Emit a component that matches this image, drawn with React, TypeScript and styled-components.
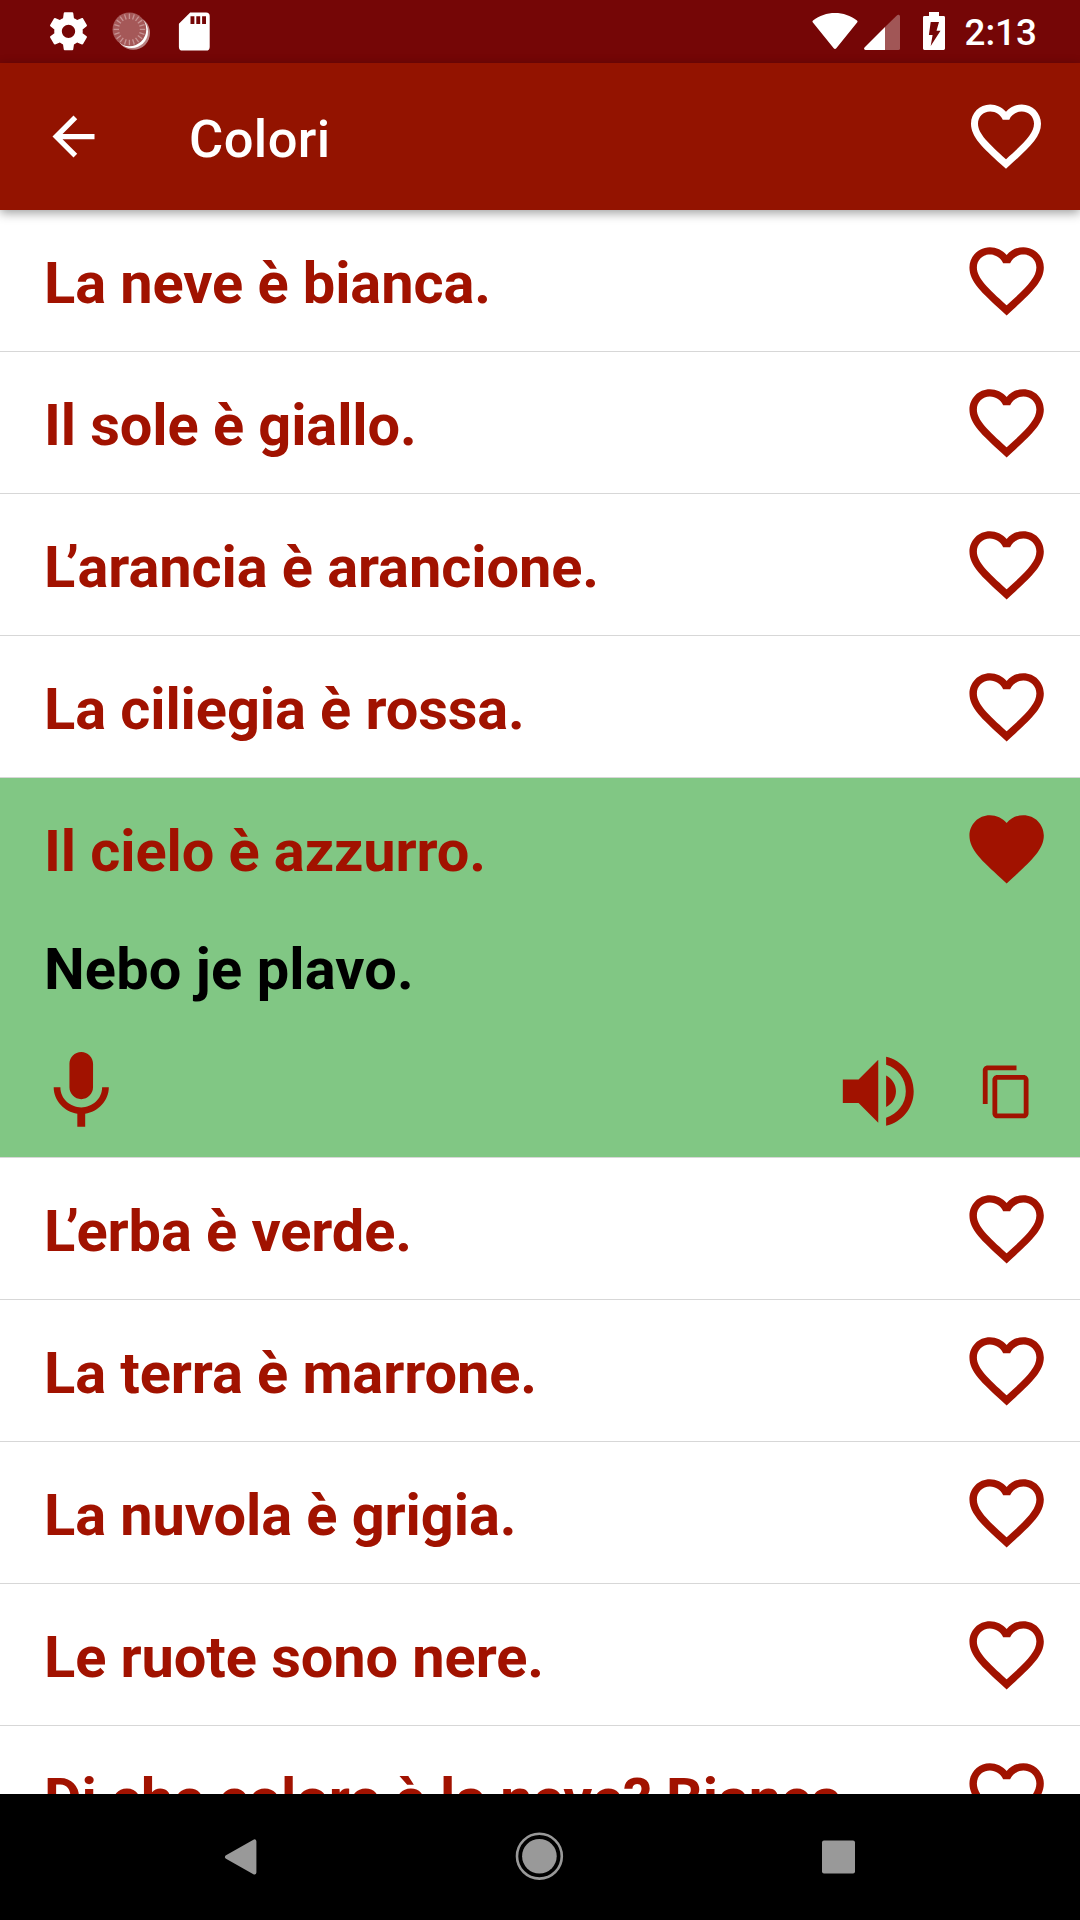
import React from "react";
import styled, { createGlobalStyle } from "styled-components";

const RED = "#a11200";

const Global = createGlobalStyle`
  body { margin: 0; background: #fff; }
  * { box-sizing: border-box; }
`;

const Screen = styled.div`
  display: flex;
  flex-direction: column;
  width: 1080px;
  height: 1920px;
  overflow: hidden;
  background: #fff;
  font-family: Roboto, "Noto Sans", sans-serif;
`;

const StatusBar = styled.header`
  display: flex;
  justify-content: space-between;
  flex: none;
  height: 63px;
  padding: 0 40px 0 46px;
  background: #750606;
`;

const StatusGroup = styled.div`
  display: flex;
  align-items: flex-start;
`;

const Clock = styled.span`
  width: 75.5px;
  margin-left: 16.5px;
  padding-top: 11px;
  color: #fff;
  font-size: 36.75px;
  font-weight: 500;
  line-height: 44px;
  white-space: nowrap;
`;

const AppBar = styled.nav`
  display: flex;
  align-items: center;
  flex: none;
  height: 147px;
  padding: 0 32px 0 42px;
  background: #931300;
  box-shadow: 0 3px 10px rgba(0, 0, 0, 0.38);
  z-index: 1;
`;

const Title = styled.h1`
  flex: 1;
  margin: 5px 0 0 84px;
  color: #fff;
  font-size: 52.5px;
  font-weight: 500;
  line-height: 62px;
  letter-spacing: 0.4px;
`;

const IconButton = styled.button<{ $lift?: number }>`
  display: flex;
  padding: 0;
  margin-bottom: ${(p) => p.$lift ?? 0}px;
  border: 0;
  background: none;
`;

const List = styled.main`
  flex: 1;
  min-height: 0;
  overflow: hidden;
`;

const Item = styled.article<{ $open?: boolean }>`
  border-bottom: 1px solid #d7d7d7;
  background: ${(p) => (p.$open ? "#81c784" : "#fff")};
  height: ${(p) => (p.$open ? 380 : 142)}px;
`;

const Row = styled.div`
  display: flex;
  align-items: flex-start;
  justify-content: space-between;
  height: 141px;
  padding: 26px 29px 0 44px;
`;

const Phrase = styled.span<{ $color?: string; $tracking?: number }>`
  display: block;
  padding-top: 13px;
  color: ${(p) => p.$color ?? RED};
  font-size: 57.75px;
  font-weight: 700;
  line-height: 68px;
  letter-spacing: ${(p) => p.$tracking ?? -0.09}px;
  white-space: nowrap;
`;

const Elision = styled.span`
  letter-spacing: -9.5px;
`;

const Translation = styled.div`
  height: 118px;
  padding: 3px 44px 0;
`;

const Actions = styled.div`
  display: flex;
  align-items: center;
  height: 94px;
  margin-top: 7px;
  padding: 0 44px 0 34px;
`;

const Spacer = styled.div`
  flex: 1;
`;

const CopySlot = styled.div`
  display: flex;
  margin: 1px 0 0 53px;
`;

const NavBar = styled.footer`
  display: flex;
  align-items: center;
  justify-content: space-around;
  flex: none;
  height: 126px;
  padding: 0 92px;
  background: #000;
`;

const HEART =
  "M16.5 3c-1.74 0-3.41.81-4.5 2.09C10.91 3.81 9.24 3 7.5 3 4.42 3 2 5.42 2 8.5c0 3.78 3.4 6.86 8.55 11.54L12 21.35l1.45-1.32C18.6 15.36 22 12.28 22 8.5 22 5.42 19.58 3 16.5 3zm-4.4 15.55l-.1.1-.1-.1C7.14 14.24 4 11.39 4 8.5 4 6.5 5.5 5 7.5 5c1.54 0 3.04.99 3.57 2.36h1.87C13.46 5.99 14.96 5 16.5 5c2 0 3.5 1.5 3.5 3.5 0 2.89-3.14 5.74-7.9 10.05z";
const HEART_FULL =
  "M12 21.35l-1.45-1.32C5.4 15.36 2 12.28 2 8.5 2 5.42 4.42 3 7.5 3c1.74 0 3.41.81 4.5 2.09C13.09 3.81 14.76 3 16.5 3 19.58 3 22 5.42 22 8.5c0 3.78-3.4 6.86-8.55 11.54L12 21.35z";
const BACK = "M20 11H7.83l5.59-5.59L12 4l-8 8 8 8 1.41-1.41L7.83 13H20v-2z";
const MIC =
  "M12 14c1.66 0 2.99-1.34 2.99-3L15 5c0-1.66-1.34-3-3-3S9 3.34 9 5v6c0 1.66 1.34 3 3 3zm5.3-3c0 3-2.54 5.1-5.3 5.1S6.7 14 6.7 11H5c0 3.41 2.72 6.23 6 6.72V21h2v-3.28c3.28-.48 6-3.3 6-6.72h-1.7z";
const VOLUME =
  "M3 9v6h4l5 5V4L7 9H3zm13.5 3c0-1.77-1.02-3.29-2.5-4.03v8.05c1.48-.73 2.5-2.25 2.5-4.02zM14 3.23v2.06c2.89.86 5 3.54 5 6.71s-2.11 5.85-5 6.71v2.06c4.01-.91 7-4.49 7-8.77s-2.99-7.86-7-8.77z";
const COPY =
  "M16 1H4c-1.1 0-2 .9-2 2v14h2V3h12V1zm3 4H8c-1.1 0-2 .9-2 2v14c0 1.1.9 2 2 2h11c1.1 0 2-.9 2-2V7c0-1.1-.9-2-2-2zm0 16H8V7h11v14z";
const GEAR =
  "M19.43 12.98c.04-.32.07-.64.07-.98s-.03-.66-.07-.98l2.11-1.65c.19-.15.24-.42.12-.64l-2-3.46c-.12-.22-.39-.3-.61-.22l-2.49 1c-.52-.4-1.08-.73-1.69-.98l-.38-2.65C14.46 2.18 14.25 2 14 2h-4c-.25 0-.46.18-.49.42l-.38 2.65c-.61.25-1.17.59-1.69.98l-2.49-1c-.23-.09-.49 0-.61.22l-2 3.46c-.13.22-.07.49.12.64l2.11 1.65c-.04.32-.07.65-.07.98s.03.66.07.98l-2.11 1.65c-.19.15-.24.42-.12.64l2 3.46c.12.22.39.3.61.22l2.49-1c.52.4 1.08.73 1.69.98l.38 2.65c.03.24.24.42.49.42h4c.25 0 .46-.18.49-.42l.38-2.65c.61-.25 1.17-.59 1.69-.98l2.49 1c.23.09.49 0 .61-.22l2-3.46c.12-.22.07-.49-.12-.64l-2.11-1.65zM12 15.5c-1.93 0-3.5-1.57-3.5-3.5s1.57-3.5 3.5-3.5 3.5 1.57 3.5 3.5-1.57 3.5-3.5 3.5z";

const Glyph = ({ d, size, color = RED }: { d: string; size: number; color?: string }) => (
  <svg width={size} height={size} viewBox="0 0 24 24" fill={color}>
    <path d={d} />
  </svg>
);

const Spinner = () => (
  <svg width="65" height="63" viewBox="0 0 65 63">
    <circle cx="41.2" cy="33" r="16.8" fill="#fff" opacity="0.5" />
    <circle cx="39.6" cy="31.6" r="16.4" fill="#fff" />
    <circle cx="37.4" cy="29.4" r="16.9" fill="#a55858" />
    {Array.from({ length: 20 }, (_, i) => (
      <line
        key={i}
        x1="37.4"
        y1="13.6"
        x2="37.4"
        y2="19"
        stroke="#c79393"
        strokeWidth="1.3"
        transform={`rotate(${i * 18} 37.4 29.4)`}
      />
    ))}
  </svg>
);

const SdCard = () => (
  <svg width="56" height="63" viewBox="0 0 56 63">
    <path
      fill="#fff"
      fillRule="evenodd"
      d="M33.500 12.500H49.400a3.600 3.600 0 0 1 3.600 3.600V46.900a3.600 3.600 0 0 1-3.600 3.600H25.800a3.600 3.600 0 0 1-3.600-3.600V23.800zM33.800 16.300v7.600h3.900v-7.600zm5.800 0v7.600h3.900v-7.600zm5.800 0v7.600h3.900v-7.600z"
      transform="translate(-0.300 0)"
    />
  </svg>
);

const Wifi = () => (
  <svg width="47" height="63" viewBox="0 0 47 63">
    <path
      fill="#fff"
      d="M0.7 22.2C0.3 21.6 0.4 20.9 1 20.4 7.5 15.6 14.8 13 23 13s15.5 2.6 22 7.4c.6.5.7 1.2.3 1.8L24.3 48.2c-.7.9-1.9.9-2.6 0z"
    />
  </svg>
);

const Signal = () => (
  <svg width="43" height="63" viewBox="0 0 43 63">
    <path
      fill="#fff"
      opacity="0.32"
      d="M26 50V27L37.8 15.4C39.2 14.2 41 14.8 41 16.5V48.400a1.600 1.600 0 0 1-1.600 1.600z"
    />
    <path fill="#fff" d="M26 27v23H6.600c-1.500 0-2-1.400-1.100-2.400z" />
  </svg>
);

const Battery = () => (
  <svg width="46" height="63" viewBox="0 0 46 63">
    <path
      fill="#fff"
      fillRule="evenodd"
      d="M27 12h10V16h4.600a1.400 1.400 0 0 1 1.400 1.400V48.600a1.400 1.400 0 0 1-1.400 1.400H22.400a1.400 1.400 0 0 1-1.400-1.400V17.400A1.400 1.400 0 0 1 22.400 16H27zM28.700 22h8.300l-2.500 8.700h4L28.700 46l1.900-11h-3.700z"
    />
  </svg>
);

const phrases: { text: string; translation?: string }[] = [
  { text: "La neve è bianca." },
  { text: "Il sole è giallo." },
  { text: "L’arancia è arancione." },
  { text: "La ciliegia è rossa." },
  { text: "Il cielo è azzurro.", translation: "Nebo je plavo." },
  { text: "L’erba è verde." },
  { text: "La terra è marrone." },
  { text: "La nuvola è grigia." },
  { text: "Le ruote sono nere." },
  { text: "Di che colore è la neve? Bianca." },
];

const Kerned = ({ text }: { text: string }) =>
  text.startsWith("L’") ? (
    <>
      <Elision>L</Elision>
      {text.slice(1)}
    </>
  ) : (
    <>{text}</>
  );

export default function App() {
  return (
    <Screen>
      <Global />
      <StatusBar>
        <StatusGroup>
          <svg width="46" height="63" viewBox="0 0 46 63">
            <g transform="translate(-0.3 8.5) scale(1.9)">
              <path fill="#fff" d={GEAR} />
            </g>
          </svg>
          <Spinner />
          <SdCard />
        </StatusGroup>
        <StatusGroup>
          <Wifi />
          <Signal />
          <Battery />
          <Clock>2:13</Clock>
        </StatusGroup>
      </StatusBar>
      <AppBar>
        <IconButton aria-label="Indietro">
          <Glyph d={BACK} size={63} color="#fff" />
        </IconButton>
        <Title>Colori</Title>
        <IconButton aria-label="Preferiti" $lift={1}>
          <Glyph d={HEART} size={84} color="#fff" />
        </IconButton>
      </AppBar>
      <List>
        {phrases.map(({ text, translation }) => (
          <Item key={text} $open={!!translation}>
            <Row>
              <Phrase>
                <Kerned text={text} />
              </Phrase>
              <IconButton>
                <Glyph d={translation ? HEART_FULL : HEART} size={89.25} />
              </IconButton>
            </Row>
            {translation && (
              <>
                <Translation>
                  <Phrase $color="#000" $tracking={0.1}>
                    {translation}
                  </Phrase>
                </Translation>
                <Actions>
                  <IconButton>
                    <Glyph d={MIC} size={94.5} />
                  </IconButton>
                  <Spacer />
                  <IconButton>
                    <Glyph d={VOLUME} size={94.5} />
                  </IconButton>
                  <CopySlot>
                    <IconButton>
                      <Glyph d={COPY} size={57.75} />
                    </IconButton>
                  </CopySlot>
                </Actions>
              </>
            )}
          </Item>
        ))}
      </List>
      <NavBar>
        <svg width="60" height="60" viewBox="0 0 60 60">
          <path
            fill="#999"
            stroke="#999"
            strokeWidth="4"
            strokeLinejoin="round"
            d="M16 30L43.4 14.4V45.6z"
          />
        </svg>
        <svg width="60" height="60" viewBox="0 0 60 60">
          <circle cx="29.4" cy="29.2" r="17.3" fill="#999" />
          <circle cx="29.4" cy="29.2" r="22.4" fill="none" stroke="#999" strokeWidth="2.6" />
        </svg>
        <svg width="60" height="60" viewBox="0 0 60 60">
          <rect x="13" y="13.4" width="33" height="33" rx="2" fill="#999" />
        </svg>
      </NavBar>
    </Screen>
  );
}
